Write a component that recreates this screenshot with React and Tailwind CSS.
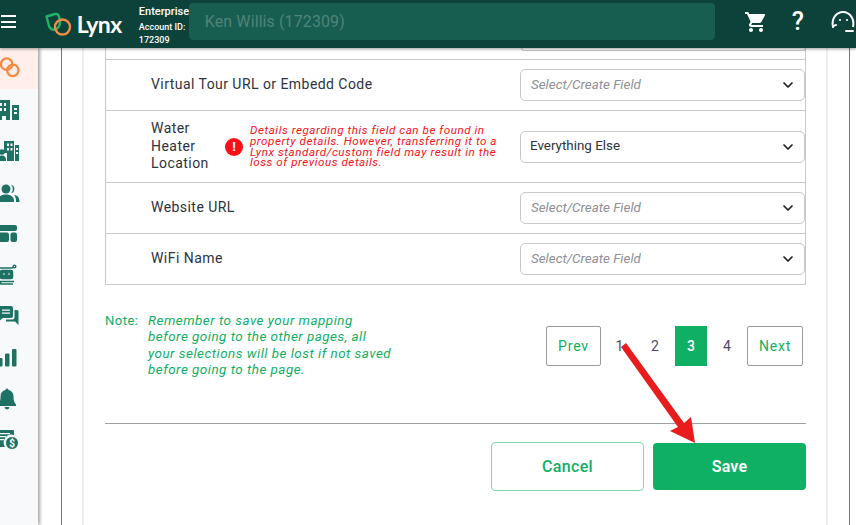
import { ChevronDown } from 'lucide-react';
import { MdShoppingCart } from 'react-icons/md';

const GREEN = 'text-[#10b064]';

// ── Sidebar icons ─────────────────────────────────────────
const icons = [
  <svg key="rings" viewBox="0 0 22 22" className="w-[21px] h-[21px] ml-px -mt-[2px]" fill="none" stroke="#f58a42" strokeWidth="2.400">
    <circle cx="8" cy="7.500" r="6" />
    <circle cx="14.500" cy="14" r="6" />
  </svg>,
  <svg key="b1" viewBox="0 0 22 22" className="w-[22px] h-[22px]" fill="#1f7263">
    <path fillRule="evenodd" d="M0 1h12v20H8v-4H4v4H0zM2 4v3h2V4zm4 0v3h2V4zM2 9v3h2V9zm4 0v3h2V9zm4-5v3h0V4zM14 6h7v15h-7zm2 3v2h3V9zm0 4v2h3v-2z" />
  </svg>,
  <svg key="b2" viewBox="0 0 22 22" className="w-[22px] h-[22px]" fill="#1f7263">
    <path fillRule="evenodd" d="M6 1h10v20H9v-8H6zM9 3.500V6h2V3.500zm3.500 0V6h2V3.500zM9 8v2.500h2V8zm3.500 0v2.500h2V8zM17 5h4v16h-4zm1 3v2h2V8zm0 4v2h2v-2z" />
    <circle cx="4" cy="12" r="2.800" />
    <path d="M0 20c0-3 1.500-4.500 4-4.500s4 1.500 4 4.500v1H0z" />
  </svg>,
  <svg key="users" viewBox="0 0 22 22" className="w-[22px] h-[22px]" fill="#1f7263">
    <circle cx="8" cy="7" r="4.500" />
    <path d="M0 19c0-4 3-6.500 8-6.500s8 2.500 8 6.500v1H0z" />
    <path d="M13 2.800a4.300 4.300 0 0 1 0 8.400c1.200-1.200 1.800-2.600 1.800-4.200S14.200 4 13 2.800zM16 12.800c3.500.6 5.500 2.800 5.500 6.200v1H18v-1c0-2.500-.6-4.500-2-6.200z" />
  </svg>,
  <svg key="layout" viewBox="0 0 22 22" className="w-[22px] h-[22px]" fill="#1f7263">
    <rect x="0" y="2" width="19" height="6" rx="2" />
    <rect x="0" y="9.500" width="11" height="9.500" rx="2" />
    <rect x="12.500" y="9.500" width="6.500" height="9.500" rx="2" />
  </svg>,
  <svg key="bot" viewBox="0 0 22 22" className="w-[22px] h-[22px]" fill="none" stroke="#1f7263" strokeWidth="1.500">
    <path d="M2 4h12l2-1" />
    <circle cx="16.500" cy="2.500" r="1.300" />
    <rect x="2.500" y="6.500" width="12" height="8" rx="1.500" fill="#1f7263" />
    <circle cx="6" cy="10" r="0.800" fill="#fff" stroke="none" />
    <circle cx="11" cy="10" r="0.800" fill="#fff" stroke="none" />
    <path d="M2 17.500h14M3 20h12" />
    <circle cx="1.500" cy="19" r="1.200" />
  </svg>,
  <svg key="chat" viewBox="0 0 22 22" className="w-[22px] h-[22px]" fill="#1f7263">
    <path fillRule="evenodd" d="M2 1h11a2 2 0 0 1 2 2v8a2 2 0 0 1-2 2H5l-4 3V3zM4 4.500v1.200h8V4.500zm0 3v1.200h8V7.500z" />
    <path d="M16.500 5H19a1.500 1.500 0 0 1 1.500 1.500V20l-3.500-3.500H8V14.500h6.500a2 2 0 0 0 2-2z" />
  </svg>,
  <svg key="bars" viewBox="0 0 22 22" className="w-[22px] h-[22px]" fill="#1f7263">
    <rect x="0" y="11" width="4.500" height="8.500" rx="1" />
    <rect x="7" y="6.500" width="4.500" height="13" rx="1" />
    <rect x="14" y="2" width="4.500" height="17.500" rx="1" />
  </svg>,
  <svg key="bell" viewBox="0 0 22 22" className="w-[22px] h-[22px]" fill="#1f7263">
    <path d="M9 0.500a1.500 1.500 0 0 1 1.500 1.500c3.200.7 5 3 5 6.500 0 4 .8 6 2.500 8v1.500H0V16.500c1.700-2 2.500-4 2.500-8 0-3.500 1.800-5.800 5-6.500A1.500 1.500 0 0 1 9 .5z" />
    <path d="M6.500 19h5a2.500 2.500 0 0 1-5 0z" />
  </svg>,
  <svg key="bill" viewBox="0 0 22 22" className="w-[22px] h-[22px]" fill="#1f7263">
    <path fillRule="evenodd" d="M0 1h15a1 1 0 0 1 1 1v4a8 8 0 0 0-9 12H0zM2 4v1.200h10V4zm0 3v1.200h6V7zm0 3v1.200h4V10z" />
    <circle cx="14" cy="14" r="6.500" fill="#1f7263" stroke="#f7f9fb" strokeWidth="1" />
    <text x="14" y="17.500" textAnchor="middle" fontSize="10" fontWeight="700" fill="#fff" fontFamily="Roboto, sans-serif">$</text>
  </svg>,
];

function Sidebar() {
  return (
    <aside className="relative z-10 w-[38px] shrink-0 bg-[#f7f9fb] shadow-[2px_0_3px_rgba(0,0,0,0.35)] overflow-hidden">
      {icons.map((icon, i) => (
        <div
          key={i}
          className={`h-[41.3px] flex items-center ${i === 0 ? 'bg-[#ffeeea]' : ''}`}
        >
          <div className="-ml-[2px]">{icon}</div>
        </div>
      ))}
    </aside>
  );
}

function Header() {
  return (
    <header className="relative z-20 h-12 shrink-0 bg-[#0c4239] shadow-[0_1px_3px_rgba(0,0,0,0.4)] flex items-start text-white">
      <div className="w-[17px] ml-px mt-[15px] flex flex-col gap-[3.500px]">
        <span className="h-[2px] bg-white" />
        <span className="h-[2px] bg-white" />
        <span className="h-[2px] bg-white" />
      </div>
      <svg viewBox="0 0 28 26" className="w-[28px] h-[26px] ml-[28px] mt-[12px] shrink-0" fill="none" strokeWidth="2.400">
        <path d="M2.500 4.500 11 2c2-.4 3.400.4 4 2.500l.8 3.500c.8 5-1.500 9-5.300 9.800C7.500 18 6 16.500 5 14z" stroke="#1eb46a" strokeLinejoin="round" />
        <circle cx="18.500" cy="15" r="7.500" stroke="#f08c48" />
      </svg>
      <span className="ml-[5px] mt-[9px] font-['Lato',sans-serif] font-bold text-[23px] leading-[30px] tracking-[-0.5px]">Lynx</span>
      <div className="ml-[17px] mt-[5px] w-[50px] shrink-0 font-['Roboto',sans-serif]">
        <div className="text-[11px] leading-[14px] font-medium">Enterprise</div>
        <div className="text-[9px] leading-[14px] font-medium mt-[1px] whitespace-nowrap">Account ID:</div>
        <div className="text-[9px] leading-[13px] font-medium">172309</div>
      </div>
      <div className="w-[526px] h-[37px] mt-[3px] shrink-0 bg-[#185e50] rounded-[4px] flex items-center pl-4 font-['Roboto',sans-serif] text-base tracking-[0.1px] text-[#4f8478]">
        Ken Willis (172309)
      </div>
      <MdShoppingCart className="ml-[29px] mt-[10px] w-[24px] h-[24px] shrink-0 text-white" />
      <span className="ml-[24px] mt-[7px] font-['Roboto',sans-serif] font-medium text-[25px] leading-[30px]">?</span>
      <svg viewBox="0 0 26 26" className="ml-[26px] mt-[9px] w-[26px] h-[26px] shrink-0" fill="none" stroke="#fff" strokeWidth="2">
        <path d="M3 18C1 9 7 3 13 3s12 6 10 15" />
        <path d="M3 18c1-2 2-2 3-2M16 22h7" strokeLinecap="round" />
        <circle cx="10" cy="11" r="0.700" fill="#fff" strokeWidth="0.800" />
        <circle cx="17" cy="11" r="0.700" fill="#fff" strokeWidth="0.800" />
      </svg>
    </header>
  );
}

function Select({ value, placeholder }) {
  return (
    <div className="h-[32px] w-[285px] shrink-0 border border-[#c8c8c8] rounded-[5px] flex items-center justify-between pl-[10px] pr-[8px] bg-white font-['Roboto',sans-serif] text-[13.400px]">
      {value ? (
        <span className="-ml-px text-[#2c3340]">{value}</span>
      ) : (
        <span className="italic text-[#8d9096]">{placeholder}</span>
      )}
      <ChevronDown className="w-[16px] h-[16px] text-[#222]" strokeWidth={2.600} />
    </div>
  );
}

function MappingRow({ label, children, height }) {
  return (
    <div className={`${height} border-b border-[#c9c9c9] flex items-center pl-[45px]`}>
      {label}
      {children}
    </div>
  );
}

function PlainLabel({ text }) {
  return <span className="w-[369px] pb-[2px] text-sm tracking-[0.45px] text-[#2c3340]">{text}</span>;
}

function Pagination() {
  return (
    <div className="flex items-center h-[40px] mt-[41px] font-['Roboto',sans-serif] text-sm">
      <span className={`w-[55px] h-[40px] border border-[#9a9a9a] rounded-[2px] flex items-center justify-center tracking-[0.8px] ${GREEN}`}>Prev</span>
      <span className="w-[37px] text-center text-[#4a4a6a]">1</span>
      <span className="w-[37px] pr-[3px] text-center text-[#4a4a6a]">2</span>
      <span className="w-[32px] h-[40px] bg-[#10b064] text-white font-medium flex items-center justify-center">3</span>
      <span className="w-[40px] text-center text-[#4a4a6a]">4</span>
      <span className={`w-[56px] h-[40px] border border-[#9a9a9a] rounded-[2px] flex items-center justify-center tracking-[0.8px] ${GREEN}`}>Next</span>
    </div>
  );
}

export default function App() {
  return (
    <div className="relative w-[856px] h-[525px] overflow-hidden flex flex-col bg-white font-['Roboto',sans-serif]">
      <Header />
      <div className="flex flex-1 min-h-0">
        <Sidebar />
        <main className="w-[789px] shrink-0 ml-[23px] border-x border-[#777] flex">
          <div className="w-[746px] ml-[20px] border-l-2 border-r-2 border-[#eeeeee] pl-[21px] shrink-0">
            {/* table */}
            <div className="w-[701px] border-l border-r border-[#c9c9c9]">
              <div className="h-[12px] border-b border-[#c9c9c9] pl-[415px]">
                <div className="w-[285px] h-[3px] border-b border-l border-r border-[#c8c8c8] rounded-b-[5px]" />
              </div>
              <MappingRow height="h-[51px]" label={<PlainLabel text="Virtual Tour URL or Embedd Code" />}>
                <Select placeholder="Select/Create Field" />
              </MappingRow>
              <MappingRow
                height="h-[72px]"
                label={
                  <div className="w-[369px] flex items-center">
                    <span className="w-[74px] text-sm leading-[17.500px] tracking-[0.45px] text-[#2c3340]">Water Heater Location</span>
                    <span className="w-[18px] h-[18px] rounded-full bg-[#fa1016] text-white text-[13px] font-bold flex items-center justify-center">!</span>
                    <p className="ml-[7px] w-[252px] text-[11.600px] leading-[10.800px] italic tracking-[0.55px] text-[#fa1016]">
                      Details regarding this field can be found in property details. However, transferring it to a Lynx standard/custom field may result in the loss of previous details.
                    </p>
                  </div>
                }
              >
                <Select value="Everything Else" />
              </MappingRow>
              <MappingRow height="h-[51px]" label={<PlainLabel text="Website URL" />}>
                <Select placeholder="Select/Create Field" />
              </MappingRow>
              <MappingRow height="h-[51px]" label={<PlainLabel text="WiFi Name" />}>
                <Select placeholder="Select/Create Field" />
              </MappingRow>
            </div>

            {/* note + pagination */}
            <div className="flex items-start h-[139px] border-b border-[#a0a0a0] w-[701px]">
              <div className={`flex leading-[16.300px] tracking-[0.5px] mt-[28px] ${GREEN}`}>
                <span className="w-[43px] shrink-0 text-[13px]">Note:</span>
                <p className="w-[250px] shrink-0 italic text-[13.400px] whitespace-nowrap">
                  Remember to save your mapping<br />
                  before going to the other pages, all<br />
                  your selections will be lost if not saved<br />
                  before going to the page.
                </p>
              </div>
              <div className="ml-[148px]">
                <Pagination />
              </div>
            </div>

            {/* actions */}
            <div className="flex justify-end items-center gap-[9px] w-[701px] mt-[18px]">
              <button className={`w-[153px] h-[49px] border border-[#7fd8ae] rounded-[4px] text-base font-medium tracking-[0.3px] ${GREEN}`}>Cancel</button>
              <button className="w-[153px] h-[47px] bg-[#10b064] rounded-[4px] text-white text-base font-semibold tracking-[0.2px]">Save</button>
            </div>
          </div>
        </main>
      </div>

      {/* annotation arrow drawn over the page */}
      <svg className="absolute left-0 top-0 z-30 pointer-events-none" width="856" height="525" fill="#e81c1c">
        <path d="M621 347 L626 343 L684 423 L691 417 L695 443 L670 431 L678 427 Z" />
      </svg>
    </div>
  );
}
